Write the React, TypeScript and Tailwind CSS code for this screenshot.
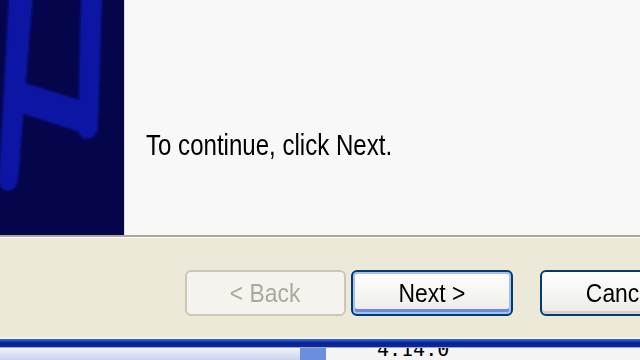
import React from "react";

export default function App() {
  const font = { fontFamily: '"Liberation Sans", Arial, sans-serif' };
  return (
    <div className="w-[640px] h-[360px] overflow-hidden flex flex-col bg-[#ece9d8]" style={font}>
      <div className="h-[235px] flex shrink-0">
        <div className="w-[124px] h-full bg-[#05054c] shrink-0">
          <svg width="124" height="235" viewBox="0 0 124 235">
            <defs>
              <filter id="b" x="-20%" y="-20%" width="140%" height="140%">
                <feGaussianBlur stdDeviation="1.4" />
              </filter>
            </defs>
            <g fill="#0a12a4" filter="url(#b)">
              <path d="M9 -5 L33 -5 L18 180 Q16 191 7 191 Q-2 189 -1 178 Z" />
              <path d="M81 -5 L102 -5 L98 128 Q96 139 87 139 Q78 138 78 128 Z" />
              <path d="M22 82 L86 102 L94 116 L92 136 L18 112 Z" />
            </g>
          </svg>
        </div>
        <div className="w-px bg-[#dcdcdc]" />
        <div className="flex-1 bg-[#f8f8f8] pl-[21px] pt-[128px]">
          <div className="text-[29px] leading-[34px] text-black origin-left scale-x-[0.83] whitespace-nowrap">
            To continue, click Next.
          </div>
        </div>
      </div>
      <div className="h-[2px] bg-[#aca899] shrink-0" />
      <div className="h-px bg-white shrink-0" />
      <div className="flex-1 bg-[#ece9d8] pt-[32px] pl-[185px] flex items-start">
        <div className="w-[161px] h-[46px] shrink-0 rounded-[6px] border-2 border-[#c9c7ba] bg-[#f4f3ee] flex items-center justify-center text-[26px] text-[#aca899]">
          <span className="scale-x-[0.88] whitespace-nowrap">&lt; Back</span>
        </div>
        <div className="ml-[5px] w-[162px] h-[46px] shrink-0 rounded-[6px] border-2 border-[#003c74] bg-gradient-to-b from-white to-[#ecebe6] flex items-center justify-center text-[26px] text-black shadow-[inset_0_0_0_2px_#a8c0ee,inset_0_-3px_0_2px_#6a8bd8]">
          <span className="scale-x-[0.88] whitespace-nowrap">Next &gt;</span>
        </div>
        <div className="ml-[27px] w-[162px] h-[46px] shrink-0 rounded-[6px] border-2 border-[#003c74] bg-gradient-to-b from-white to-[#ecebe6] flex items-center justify-center text-[26px] text-black shadow-[inset_0_-3px_0_0_#d6d0c5]">
          <span className="scale-x-[0.88] whitespace-nowrap">Cancel</span>
        </div>
      </div>
      <div className="h-[2px] shrink-0 bg-[#f4f2ea]" />
      <div className="h-[8px] shrink-0 bg-gradient-to-b from-[#3a6ee6] via-[#0a1e94] to-[#0b2a9a]" />
      <div className="h-px shrink-0 bg-[#9aa6c4]" />
      <div className="h-[12px] shrink-0 flex">
        <div className="w-[300px] bg-gradient-to-b from-[#f2f4fa] to-[#c8d2ee]" />
        <div className="w-[26px] bg-[#6b8fdc]" />
        <div className="flex-1 bg-[#f4f4f4] relative overflow-hidden">
          <div className="absolute left-[51px] -top-[9px] text-[20px] leading-[20px] text-black" style={{ fontFamily: '"DejaVu Sans Mono", monospace' }}>
            4.14.0
          </div>
        </div>
      </div>
    </div>
  );
}
